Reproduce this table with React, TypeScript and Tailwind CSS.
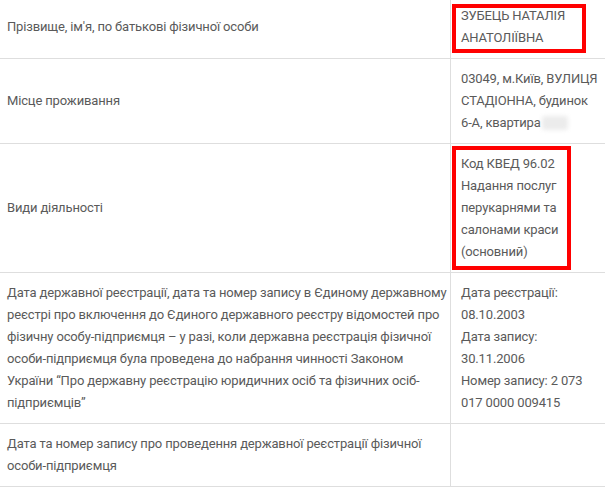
import React from "react";

function Lines({ lines }: { lines: string[] }) {
  return (
    <>
      {lines.map((l, i) => (
        <span key={i} className="block whitespace-nowrap">
          {l}
        </span>
      ))}
    </>
  );
}

type Row = {
  left: string[];
  right: React.ReactNode;
  box?: string;
  first?: boolean;
};

export default function App() {
  const rows: Row[] = [
    {
      left: ["Прізвище, ім'я, по батькові фізичної особи"],
      right: <Lines lines={["ЗУБЕЦЬ НАТАЛІЯ", "АНАТОЛІЇВНА"]} />,
      box: "left-[1px] top-[4px] w-[134px] h-[49px]",
      first: true,
    },
    {
      left: ["Місце проживання"],
      right: (
        <>
          <span className="block whitespace-nowrap">03049, м.Київ, ВУЛИЦЯ</span>
          <span className="block whitespace-nowrap">СТАДІОННА, будинок</span>
          <span className="flex items-center whitespace-nowrap">
            6-А, квартира
            <span className="ml-[1px] inline-block h-[14px] w-[26px] rounded-[3px] bg-[#ececec] blur-[2px]" />
          </span>
        </>
      ),
    },
    {
      left: ["Види діяльності"],
      right: (
        <Lines
          lines={[
            "Код КВЕД 96.02",
            "Надання послуг",
            "перукарнями та",
            "салонами краси",
            "(основний)",
          ]}
        />
      ),
      box: "left-[1px] top-[2px] w-[119px] h-[124px]",
    },
    {
      left: [
        "Дата державної реєстрації, дата та номер запису в Єдиному державному",
        "реєстрі про включення до Єдиного державного реєстру відомостей про",
        "фізичну особу-підприємця – у разі, коли державна реєстрація фізичної",
        "особи-підприємця була проведена до набрання чинності Законом",
        "України “Про державну реєстрацію юридичних осіб та фізичних осіб-",
        "підприємців”",
      ],
      right: (
        <Lines
          lines={[
            "Дата реєстрації:",
            "08.10.2003",
            "Дата запису:",
            "30.11.2006",
            "Номер запису: 2 073",
            "017 0000 009415",
          ]}
        />
      ),
    },
    {
      left: [
        "Дата та номер запису про проведення державної реєстрації фізичної",
        "особи-підприємця",
      ],
      right: null,
    },
  ];

  return (
    <div
      className="w-[605px] h-[488px] overflow-hidden bg-white text-[13px] leading-[22px] tracking-[-0.15px] text-[#5a5a5a]"
      style={{ fontFamily: "Roboto, 'Noto Sans', sans-serif" }}
    >
      <div className="grid grid-cols-[451px_1fr]">
        {rows.map((r, i) => (
          <React.Fragment key={i}>
            <div
              className={
                "flex flex-col justify-center overflow-hidden border-r border-b border-[#dedede] pl-[7px] pr-[6px] " +
                (r.first ? "pt-[5px] pb-[9px]" : "py-[9px]")
              }
            >
              <Lines lines={r.left} />
            </div>
            <div
              className={
                "relative border-b border-[#dedede] pl-[10px] pr-[4px] " +
                (r.first ? "pt-[5px] pb-[9px]" : "py-[9px]")
              }
            >
              {r.right}
              {r.box && (
                <div className={"pointer-events-none absolute border-[4px] border-[#ff0000] " + r.box} />
              )}
            </div>
          </React.Fragment>
        ))}
      </div>
    </div>
  );
}
